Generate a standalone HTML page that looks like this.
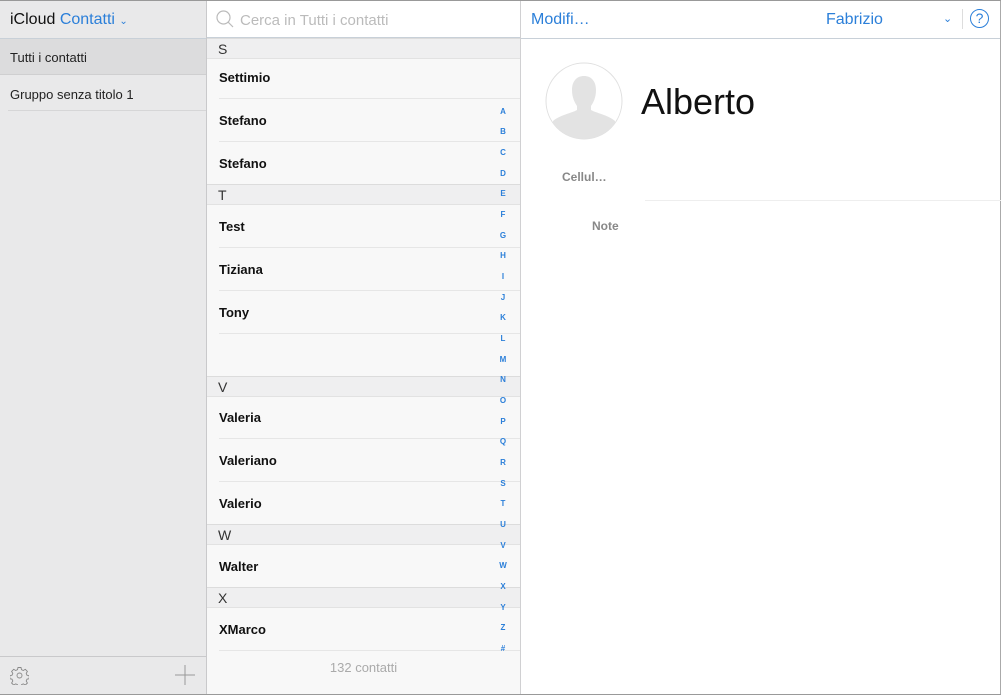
<!DOCTYPE html>
<html><head><style>
*{margin:0;padding:0;box-sizing:border-box}
body{width:1001px;height:695px;overflow:hidden;font-family:"Liberation Sans",sans-serif;background:#fff;position:relative}
.a{position:absolute}
#left{left:0;top:0;width:207px;height:695px;background:#e9e9ea;border-right:1px solid #c9c9cb}
#mid{left:207px;top:0;width:314px;height:695px;background:#f8f8f8;border-right:1px solid #d0d0d2}
#right{left:521px;top:0;width:480px;height:695px;background:#fff;border-right:1px solid #aaa}
.sh{position:absolute;left:0;width:313px;height:21px;background:#efeff0;border-top:1px solid #dcdcdc;border-bottom:1px solid #e2e2e2;font-size:14px;color:#333;padding:2px 0 0 11px}
.row{position:absolute;left:0;width:313px;font-size:13px;font-weight:bold;color:#111;padding-left:12px}
.ln{position:absolute;left:12px;width:301px;height:1px;background:#e6e6e6}
.idx{position:absolute;left:290px;width:12px;text-align:center;font-size:8px;font-weight:bold;color:#2b7fd9}
</style></head><body>
<div class="a" style="left:0;top:0;width:1001px;height:1px;background:#999;z-index:5"></div>
<div class="a" style="left:0;top:694px;width:1001px;height:1px;background:#999;z-index:5"></div>
<div id="left" class="a">
 <div class="a" style="left:10px;top:11px;font-size:16px;color:#111">iCloud <span style="color:#2b7fd9">Contatti</span> <span style="color:#2b7fd9;font-size:10px">&#8964;</span></div>
 <div class="a" style="left:0;top:38px;width:206px;height:1px;background:#c8d0d8"></div>
 <div class="a" style="left:0;top:39px;width:206px;height:36px;background:#dcdcdd;border-bottom:1px solid #cfcfd0"></div>
 <div class="a" style="left:10px;top:50px;font-size:13px;color:#222">Tutti i contatti</div>
 <div class="a" style="left:10px;top:87px;font-size:13px;color:#222">Gruppo senza titolo 1</div>
 <div class="a" style="left:8px;top:110px;width:198px;height:1px;background:#d6d6d7"></div>
 <div class="a" style="left:0;top:656px;width:206px;height:1px;background:#c9c9cb"></div>
 <svg class="a" style="left:10px;top:666px" width="19" height="19" viewBox="0 0 19 19" fill="none" stroke="#888" stroke-width="0.9"><circle cx="9.5" cy="9.5" r="2.5"/><path d="M8 1.5h3l.5 2.2 1.8.8 2-1.2 2.1 2.1-1.2 2 .8 1.8 2.2.5v3l-2.2.5-.8 1.8 1.2 2-2.1 2.1-2-1.2-1.8.8-.5 2.2H8l-.5-2.2-1.8-.8-2 1.2-2.1-2.1 1.2-2-.8-1.8-2.2-.5v-3l2.2-.5.8-1.8-1.2-2L3.7 3.3l2 1.2 1.8-.8z"/></svg>
 <svg class="a" style="left:175px;top:665px" width="20" height="20" stroke="#999" stroke-width="1"><path d="M10 0v20M0 10h20"/></svg>
</div>
<div id="mid" class="a">
 <div class="a" style="left:0;top:0;width:313px;height:38px;background:#fff;border-bottom:1px solid #c8d0d8"></div>
 <svg class="a" style="left:9px;top:10px" width="18" height="18" fill="none" stroke="#bbb" stroke-width="1.2"><circle cx="7.5" cy="7.5" r="6.5"/><path d="M12 12l5 5"/></svg>
 <div class="a" style="left:33px;top:12px;font-size:15px;color:#bbb">Cerca in Tutti i contatti</div>
 <div class="sh" style="top:38px">S</div>
 <div class="row" style="top:70px">Settimio</div><div class="ln" style="top:98px"></div>
 <div class="row" style="top:113px">Stefano</div><div class="ln" style="top:141px"></div>
 <div class="row" style="top:156px">Stefano</div>
 <div class="sh" style="top:184px">T</div>
 <div class="row" style="top:219px">Test</div><div class="ln" style="top:247px"></div>
 <div class="row" style="top:262px">Tiziana</div><div class="ln" style="top:290px"></div>
 <div class="row" style="top:305px">Tony</div><div class="ln" style="top:333px"></div>
 <div class="sh" style="top:376px">V</div>
 <div class="row" style="top:410px">Valeria</div><div class="ln" style="top:438px"></div>
 <div class="row" style="top:453px">Valeriano</div><div class="ln" style="top:481px"></div>
 <div class="row" style="top:496px">Valerio</div>
 <div class="sh" style="top:524px">W</div>
 <div class="row" style="top:559px">Walter</div>
 <div class="sh" style="top:587px">X</div>
 <div class="row" style="top:622px">XMarco</div><div class="ln" style="top:650px"></div>
 <div class="a" style="left:0;top:660px;width:313px;text-align:center;font-size:13px;color:#aaa">132 contatti</div>
 <div class="idx" style="top:107px">A</div><div class="idx" style="top:127px">B</div><div class="idx" style="top:148px">C</div><div class="idx" style="top:169px">D</div><div class="idx" style="top:189px">E</div><div class="idx" style="top:210px">F</div><div class="idx" style="top:231px">G</div><div class="idx" style="top:251px">H</div><div class="idx" style="top:272px">I</div><div class="idx" style="top:293px">J</div><div class="idx" style="top:313px">K</div><div class="idx" style="top:334px">L</div><div class="idx" style="top:355px">M</div><div class="idx" style="top:375px">N</div><div class="idx" style="top:396px">O</div><div class="idx" style="top:417px">P</div><div class="idx" style="top:437px">Q</div><div class="idx" style="top:458px">R</div><div class="idx" style="top:479px">S</div><div class="idx" style="top:499px">T</div><div class="idx" style="top:520px">U</div><div class="idx" style="top:541px">V</div><div class="idx" style="top:561px">W</div><div class="idx" style="top:582px">X</div><div class="idx" style="top:603px">Y</div><div class="idx" style="top:623px">Z</div><div class="idx" style="top:644px">#</div>
</div>
<div id="right" class="a">
 <div class="a" style="left:0;top:38px;width:479px;height:1px;background:#c8d0d8"></div>
 <div class="a" style="left:10px;top:11px;font-size:16px;color:#2b7fd9">Modifi…</div>
 <div class="a" style="left:305px;top:11px;font-size:16px;color:#2b7fd9">Fabrizio</div>
 <div class="a" style="left:422px;top:12px;font-size:11px;color:#2b7fd9">&#8964;</div>
 <div class="a" style="left:441px;top:9px;width:1px;height:20px;background:#ddd"></div>
 <div class="a" style="left:449px;top:9px;width:19px;height:19px;border:1px solid #2b7fd9;border-radius:50%;font-size:14px;color:#2b7fd9;text-align:center;line-height:17px">?</div>
 <svg class="a" style="left:24px;top:62px" width="78" height="78"><defs><clipPath id="c"><circle cx="39" cy="39" r="38"/></clipPath></defs><circle cx="39" cy="39" r="38" fill="#fff" stroke="#e0e0e0"/><g clip-path="url(#c)" fill="#e3e3e3"><path d="M27 28c0-9 5-14 12-14s12 5 12 14c0 8-3 13-5 16v4c5 3 17 5 24 11v25H8V59c7-6 19-8 24-11v-4c-2-3-5-8-5-16z"/></g></svg>
 <div class="a" style="left:120px;top:81px;font-size:36px;color:#111">Alberto</div>
 <div class="a" style="left:41px;top:170px;font-size:12px;font-weight:bold;color:#888">Cellul…</div>
 <div class="a" style="left:124px;top:200px;width:356px;height:1px;background:#eee"></div>
 <div class="a" style="left:71px;top:219px;font-size:12px;font-weight:bold;color:#888">Note</div>
</div>
</body></html>
